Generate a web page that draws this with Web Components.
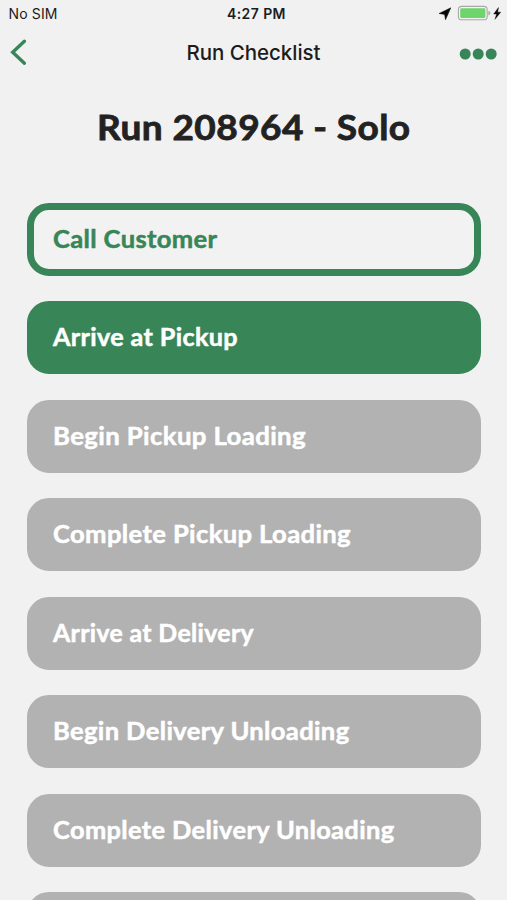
<!DOCTYPE html>
<html lang="en"><head><meta charset="utf-8"><title>Run Checklist</title>
<style>
html,body{margin:0;height:900px;overflow:hidden;background:#f1f1f1}
</style></head><body>
<run-screen></run-screen>
<script>
// Text that fills the given width: by letter tracking, or, with the
// "stretch" attribute, by widening the glyphs themselves.
class FitText extends HTMLElement{
  connectedCallback(){
    const r=this.attachShadow({mode:'open'});
    r.innerHTML='<style>:host{display:inline-block;white-space:nowrap}span{display:inline-block;transform-origin:0 50%}</style><span></span>';
    const s=r.querySelector('span'),t=this.getAttribute('text');
    s.textContent=t;
    const n=s.getBoundingClientRect().width,w=+this.getAttribute('width');
    if(this.hasAttribute('stretch')){
      this.style.width=w+'px';
      s.style.transform='scaleX('+w/n+')';
    }else{
      const gap=(w-n)/(t.length-1);
      s.style.letterSpacing=gap+'px';
      s.style.marginRight=-gap+'px';
    }
  }
}
customElements.define('fit-text',FitText);

class StatusBar extends HTMLElement{
  connectedCallback(){
    this.attachShadow({mode:'open'}).innerHTML=`<style>
    :host{display:grid;grid-template-columns:1fr auto 1fr;align-items:center;height:28px;padding:0 4px 0 8.5px;box-sizing:border-box;font:14px/28px Inter,sans-serif;color:#1c1c1c}
    .time{font-weight:600;padding-left:1px}
    svg{justify-self:end;display:block}</style>
    <fit-text text="No SIM" width="49"></fit-text>
    <fit-text class="time" text="4:27 PM" width="58.5"></fit-text>
    <svg width="66" height="28" viewBox="437 0 66 28">
      <path d="M450.8 7.8 L439 13.5 L444.6 14.4 L445.5 19.8 Z" fill="#080808" stroke="#080808" stroke-width=".5"/>
      <rect x="458.4" y="6.4" width="28.8" height="13.4" rx="3.4" fill="#f6f2f5" stroke="#aaa7aa" stroke-width="1.1"/>
      <rect x="460.2" y="8.3" width="25.2" height="9.6" rx="1.4" fill="#6dd56c"/>
      <path d="M488.4 10.7q2 .5 2 2.4t-2 2.4z" fill="#aaa"/>
      <path d="M498.5 7.5 L493.7 14 H496.6 L495 19.3 L500.7 12.2 H497.6 Z" fill="#080808" stroke="#080808" stroke-width=".4"/>
    </svg>`;
  }
}
customElements.define('status-bar',StatusBar);

class NavBar extends HTMLElement{
  connectedCallback(){
    this.attachShadow({mode:'open'}).innerHTML=`<style>
    :host{display:grid;grid-template-columns:1fr auto 1fr;align-items:center;height:50px;padding:0 9px;box-sizing:border-box;font:500 20.5px/48px Inter,sans-serif;color:#1c1c1c}
    svg{display:block}.more{justify-self:end}</style>
    <svg width="20" height="50" viewBox="9 28 20 50"><path d="M24.4 41.2 L12.7 52.2 L24.4 63.2" fill="none" stroke="#388558" stroke-width="3.4" stroke-linecap="round" stroke-linejoin="miter"/></svg>
    <fit-text text="Run Checklist" width="134"></fit-text>
    <svg class="more" width="40" height="50" viewBox="458 28 40 50" fill="#388558"><circle cx="465.2" cy="54" r="5.5"/><circle cx="478.2" cy="54" r="5.5"/><circle cx="491.2" cy="54" r="5.5"/></svg>`;
  }
}
customElements.define('nav-bar',NavBar);

class ChecklistStep extends HTMLElement{
  connectedCallback(){
    const label=this.getAttribute('label');
    this.attachShadow({mode:'open'}).innerHTML=`<style>
    :host{display:flex;align-items:center;box-sizing:border-box;height:73px;border:7px solid #b2b2b2;border-radius:22px;background:#b2b2b2;color:#fff;padding:0 20px 1px 19.8px;font:700 24.5px/30px Lato,sans-serif;letter-spacing:.35px;-webkit-text-stroke:.5px;flex:none}
    :host([state=active]){background:#388558;border-color:#388558}
    :host([state=outline]){background:#f2f2f2;border-color:#388558;color:#388558}
    </style>`+(label?`<fit-text stretch text="${label}" width="${this.getAttribute('width')}"></fit-text>`:'');
  }
}
customElements.define('checklist-step',ChecklistStep);

class RunScreen extends HTMLElement{
  connectedCallback(){
    this.attachShadow({mode:'open'}).innerHTML=`<style>
    :host{display:flex;flex-direction:column;height:900px;overflow:hidden}
    h1{margin:0;height:124.7px;flex:none;display:flex;justify-content:center;padding-top:26px;box-sizing:border-box;font:700 34.5px/46px Lato,sans-serif;letter-spacing:.4px;-webkit-text-stroke:.8px;color:#222}
    .list{display:flex;flex-direction:column;gap:25.5px;padding:0 25.7px 0 26.7px}
    </style>
    <status-bar></status-bar><nav-bar></nav-bar>
    <h1><fit-text stretch text="Run 208964 - Solo" width="313.5"></fit-text></h1>
    <div class="list">
      <checklist-step state="outline" label="Call Customer" width="164.5"></checklist-step>
      <checklist-step state="active" label="Arrive at Pickup" width="185"></checklist-step>
      <checklist-step label="Begin Pickup Loading" width="253"></checklist-step>
      <checklist-step label="Complete Pickup Loading" width="298"></checklist-step>
      <checklist-step label="Arrive at Delivery" width="201"></checklist-step>
      <checklist-step label="Begin Delivery Unloading" width="296.5"></checklist-step>
      <checklist-step label="Complete Delivery Unloading" width="341.5"></checklist-step>
      <checklist-step></checklist-step>
    </div>`;
  }
}
customElements.define('run-screen',RunScreen);
</script></body></html>
